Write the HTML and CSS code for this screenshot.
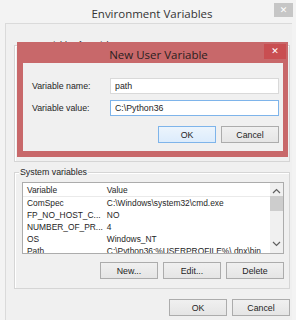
FILE: index.html
```html
<!DOCTYPE html>
<html lang="en">
<head>
  <meta charset="UTF-8" />
  <meta name="viewport" content="width=device-width, initial-scale=1.0"/>
  <title>Environment Variables</title>
  <link rel="stylesheet" href="styles.css">
</head>
<body>
  <div class="window">
    <div class="titlebar">
      <span class="title">Environment Variables</span>
      <span class="close-btn">&#x2715;</span>
    </div>

    <div class="client">
      <div class="group group-user">
        <span class="legend">User variables for Krish</span>
      </div>

      <div class="group group-system">
        <span class="legend">System variables</span>
        <div class="listbox">
          <table class="vars">
            <colgroup>
              <col class="col-name">
              <col>
            </colgroup>
            <thead>
              <tr><th>Variable</th><th>Value</th></tr>
            </thead>
            <tbody>
              <tr><td>ComSpec</td><td>C:\Windows\system32\cmd.exe</td></tr>
              <tr><td>FP_NO_HOST_C...</td><td>NO</td></tr>
              <tr><td>NUMBER_OF_PR...</td><td>4</td></tr>
              <tr><td>OS</td><td>Windows_NT</td></tr>
              <tr><td>Path</td><td>C:\Python36;%USERPROFILE%\.dnx\bin...</td></tr>
            </tbody>
          </table>
          <div class="scrollbar">
            <svg class="arrow" width="9" height="6" viewBox="0 0 9 6"><path d="M1 5 L4.5 1.5 L8 5" fill="none" stroke="#606060" stroke-width="1.2"/></svg>
            <div class="thumb"></div>
            <div class="track"></div>
            <svg class="arrow" width="9" height="6" viewBox="0 0 9 6"><path d="M1 1 L4.5 4.5 L8 1" fill="none" stroke="#606060" stroke-width="1.2"/></svg>
          </div>
        </div>
        <div class="btn-row">
          <button class="btn">New...</button>
          <button class="btn">Edit...</button>
          <button class="btn">Delete</button>
        </div>
      </div>

      <div class="btn-row footer">
        <button class="btn">OK</button>
        <button class="btn">Cancel</button>
      </div>
    </div>

    <!-- dialog on top of the main window -->
    <div class="dialog">
      <div class="dialog-title">
        <span class="title">New User Variable</span>
        <span class="close-btn red">&#x2715;</span>
      </div>
      <div class="dialog-body">
        <div class="field">
          <label for="var-name">Variable name:</label>
          <input type="text" id="var-name" value="path" />
        </div>
        <div class="field">
          <label for="var-value">Variable value:</label>
          <input type="text" id="var-value" class="focused" value="C:\Python36" />
        </div>
        <div class="btn-row">
          <button class="btn default">OK</button>
          <button class="btn">Cancel</button>
        </div>
      </div>
    </div>
  </div>
</body>
</html>
```

FILE: styles.css
```css
body {
  margin: 0;
  background: #f3f3f3;
  font-family: 'Liberation Sans', Arial, sans-serif;
  font-size: 8.4px;
  color: #1e1e1e;
}

.window {
  position: relative;
  width: 296px;
  height: 320px;
  overflow: hidden;
  display: flex;
  flex-direction: column;
}

.titlebar {
  position: relative;
  height: 23px;
  flex: none;
  display: flex;
  justify-content: center;
  align-items: center;
  padding-top: 3px;
  box-sizing: border-box;
}

.titlebar .title {
  font-family: 'Open Sans', sans-serif;
  font-size: 11.5px;
  color: #333;
  margin-left: 8px;
}

.close-btn {
  position: absolute;
  top: 3px;
  right: 3px;
  width: 19px;
  height: 14px;
  background: #c6c6c6;
  color: #fff;
  font-size: 9px;
  line-height: 14px;
  text-align: center;
  font-family: 'DejaVu Sans', sans-serif;
}

.client {
  flex: 1;
  margin-left: 5px;
  margin-right: 4px;
  border-left: 1px solid #dadada;
  border-top: 1px solid #dadada;
  background: #f0f0f0;
  padding: 0 2px 0 8px;
}

.group {
  position: relative;
  border: 1px solid #d5d5d5;
  box-shadow: 1px 1px 0 #fff inset;
}

.group .legend {
  position: absolute;
  top: -7px;
  left: 4px;
  padding: 0 1px;
  background: #f0f0f0;
  line-height: 12px;
  font-size: 8.8px;
}

.group-user {
  margin-top: 21px;
  height: 115px;
}

.group-system {
  margin-top: 10px;
  padding: 9px 5px 9px 7px;
}

.listbox {
  height: 70px;
  border: 1px solid #acacac;
  background: #fff;
  display: flex;
  overflow: hidden;
}

.vars {
  flex: 1;
  min-width: 0;
  table-layout: fixed;
  border-collapse: collapse;
  white-space: nowrap;
  align-self: flex-start;
}

.vars .col-name {
  width: 77px;
}

.vars th,
.vars td {
  text-align: left;
  font-weight: normal;
  padding: 0 0 0 4px;
  height: 12px;
  line-height: 12px;
  overflow: hidden;
}

.vars th {
  height: 13px;
  border-bottom: 1px solid #eaeaea;
}

.scrollbar {
  width: 13px;
  flex: none;
  background: #f0f0f0;
  display: flex;
  flex-direction: column;
  align-items: center;
}

.scrollbar .arrow {
  margin: 5px 0 2px;
}

.scrollbar .arrow:last-child {
  margin: 2px 0 6px;
}

.scrollbar .thumb {
  width: 13px;
  height: 15px;
  background: #cdcdcd;
}

.scrollbar .track {
  flex: 1;
}

.btn-row {
  display: flex;
  justify-content: flex-end;
  gap: 5px;
  margin-top: 8px;
}

.btn {
  width: 58px;
  height: 17px;
  padding: 0;
  border: 1px solid #acacac;
  background: linear-gradient(#f0f0f0, #e5e5e5);
  font-family: 'Liberation Sans', Arial, sans-serif;
  font-size: 8.8px;
  color: #1e1e1e;
}

.btn.default {
  border-color: #7eb4ea;
  background: linear-gradient(#ecf4fc, #dcecfc);
}

.footer {
  margin-top: 10px;
}

.dialog {
  position: absolute;
  left: 17px;
  top: 42px;
  width: 271px;
  height: 115px;
  background: #c8686a;
  display: flex;
  flex-direction: column;
}

.dialog-title {
  position: relative;
  height: 23px;
  display: flex;
  justify-content: center;
  align-items: center;
  padding-top: 3px;
  box-sizing: border-box;
}

.dialog-title .title {
  font-family: 'Open Sans', sans-serif;
  font-size: 11.5px;
  color: #2a2020;
  margin-left: 12px;
}

.close-btn.red {
  top: 2px;
  right: 2px;
  width: 22px;
  height: 15px;
  line-height: 15px;
  background: #c94e51;
}

.dialog-body {
  flex: 1;
  margin: 0 5px 6px 6px;
  background: #f0f0f0;
  padding: 15px 4px 8px 9px;
}

.field {
  display: flex;
  align-items: center;
  margin-bottom: 6px;
}

.field label {
  width: 78px;
  font-size: 8.8px;
}

.field input {
  flex: 1;
  height: 16px;
  box-sizing: border-box;
  border: 1px solid #d9d9d9;
  padding: 0 4px;
  font-family: 'Liberation Sans', Arial, sans-serif;
  font-size: 8.8px;
  color: #1e1e1e;
  background: #fff;
}

.field input.focused {
  border-color: #7eb4ea;
}

.dialog-body .btn-row {
  margin-top: 10px;
}
```
